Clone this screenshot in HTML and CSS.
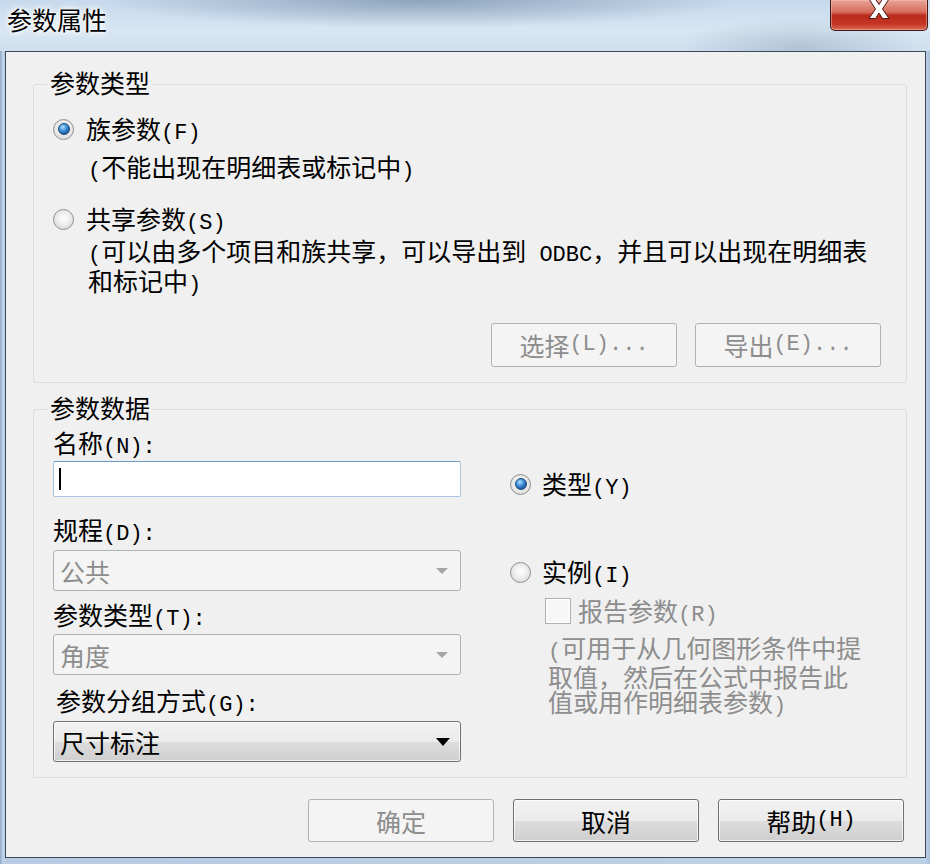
FILE: index.html
```html
<!DOCTYPE html>
<html lang="zh-CN">
<head>
<meta charset="utf-8">
<title>参数属性</title>
<link rel="stylesheet" href="styles.css">
</head>
<body>
<div class="window">
  <div class="titlebar">
    <div class="title">参数属性</div>
    <div class="close">
      <svg class="close-x" width="24" height="19" viewBox="0 0 24 19"><path d="M2 -1 H8.5 L12 4.5 L15.5 -1 H22 L15.5 9 L22 18.5 H15.5 L12 13 L8.5 18.5 H2 L8.5 9 Z" fill="#fff" stroke="#4a1a14" stroke-width="1"/></svg>
    </div>
  </div>
  <div class="client">
    <fieldset class="group g1">
      <legend>参数类型</legend>
      <div class="g1-body">
        <div class="opt"><span class="radio"><span class="dot"></span></span><span>族参数<span class="m">(F)</span></span></div>
        <div class="note1"><span class="m">(</span>不能出现在明细表或标记中<span class="m">)</span></div>
        <div class="opt opt2"><span class="radio"></span><span>共享参数<span class="m">(S)</span></span></div>
        <div class="note2"><span class="m">(</span>可以由多个项目和族共享，可以导出到<span class="m"> ODBC</span>，并且可以出现在明细表<br>和标记中<span class="m">)</span></div>
        <div class="btnrow">
          <div class="btn disabled">选择<span class="m">(L)...</span></div>
          <div class="btn disabled">导出<span class="m">(E)...</span></div>
        </div>
      </div>
    </fieldset>

    <fieldset class="group g2">
      <legend>参数数据</legend>
      <div class="g2-body">
        <div class="col-left">
          <div class="lbl">名称<span class="m">(N):</span></div>
          <div class="textbox"><span class="caret"></span></div>
          <div class="lbl lbl-d">规程<span class="m">(D):</span></div>
          <div class="select disabled s1"><span>公共</span><span class="arrow"></span></div>
          <div class="lbl lbl-t">参数类型<span class="m">(T):</span></div>
          <div class="select disabled s2"><span>角度</span><span class="arrow"></span></div>
          <div class="lbl lbl-g">参数分组方式<span class="m">(G):</span></div>
          <div class="select s3"><span>尺寸标注</span><span class="arrow"></span></div>
        </div>
        <div class="col-right">
          <div class="opt r1"><span class="radio"><span class="dot"></span></span><span>类型<span class="m">(Y)</span></span></div>
          <div class="opt r2"><span class="radio"></span><span>实例<span class="m">(I)</span></span></div>
          <div class="chkrow"><span class="check"></span><span>报告参数<span class="m">(R)</span></span></div>
          <div class="desc"><span class="m">(</span>可用于从几何图形条件中提<br>取值，然后在公式中报告此<br>值或用作明细表参数<span class="m">)</span></div>
        </div>
      </div>
    </fieldset>

    <div class="footer">
      <div class="btn disabled">确定</div>
      <div class="btn">取消</div>
      <div class="btn">帮助<span class="m">(H)</span></div>
    </div>
  </div>
</div>
</body>
</html>
```

FILE: styles.css
```css
* { box-sizing: border-box; }
html, body { margin: 0; padding: 0; }
body {
  width: 930px;
  height: 864px;
  overflow: hidden;
  font-family: "Noto Sans CJK SC", "Noto Sans CJK JP", sans-serif;
  font-size: 25px;
  color: #000;
  background: #b9cee3;
}
.m {
  font-family: "Liberation Mono", "DejaVu Sans Mono", monospace;
  font-size: 22px;
  line-height: 1;
}

.window {
  width: 930px;
  height: 864px;
  display: flex;
  flex-direction: column;
  background: linear-gradient(90deg, #8fa9c4 0px, #c3d6ea 3px, #b7cce2 5px, #bdd1e6 925px, #a9c1da 930px);
}

/* title bar */
.titlebar {
  height: 51px;
  flex: none;
  display: flex;
  justify-content: space-between;
  align-items: flex-start;
  background:
    radial-gradient(ellipse 320px 28px at 420px 0px, rgba(95,120,150,0.55), rgba(95,120,150,0) 100%),
    radial-gradient(ellipse 120px 30px at 800px 48px, rgba(120,140,165,0.35), rgba(120,140,165,0) 100%),
    linear-gradient(#c6d9ec, #d8e6f3 60%, #cfdfef);
}
.title {
  margin-top: 5px;
  padding-left: 7px;
  line-height: 28px;
  text-shadow: 0 0 6px #fff, 0 0 10px #fff, 0 0 3px #fff;
}
.close {
  width: 98px;
  height: 31px;
  margin-right: 2px;
  border: 1px solid #3d1a15;
  border-top: none;
  border-radius: 0 0 5px 5px;
  background: linear-gradient(#e7a596 0%, #d86c5c 40%, #b8291b 52%, #c53626 80%, #d86a56 100%);
  box-shadow: inset 0 0 0 1px rgba(255,200,190,0.45);
  display: flex;
  justify-content: center;
  align-items: flex-start;
}
.close-x { display: block; }

/* client area */
.client {
  margin-left: 5px;
  width: 921px;
  height: 807px;
  flex: none;
  border: 1px solid #3a4a5c;
  background: #f0f0f0;
  padding: 19px 18px 0 27px;
  display: flex;
  flex-direction: column;
}

.group {
  margin: 0;
  padding: 0;
  min-width: 0;
  border: 1px solid #d5dfe5;
  border-radius: 3px;
}
.group legend {
  margin-left: 14px;
  padding: 0 2px 4px;
  line-height: 22px;
  font-size: 25px;
}

.g1-body {
  padding: 18px 25px 15px 19px;
  display: flex;
  flex-direction: column;
}
.opt {
  display: flex;
  align-items: center;
  height: 28px;
  line-height: 28px;
  gap: 12px;
  white-space: nowrap;
}
.radio {
  width: 21px;
  height: 21px;
  flex: none;
  border-radius: 50%;
  border: 1px solid #8e8f8f;
  background: radial-gradient(circle at 50% 45%, #ffffff 0%, #f0f0f0 40%, #d6d6d6 85%, #e6e6e6 100%);
  display: flex;
  align-items: center;
  justify-content: center;
}
.dot {
  width: 12px;
  height: 12px;
  border-radius: 50%;
  border: 1px solid #1b4876;
  background: radial-gradient(circle at 38% 32%, #b5e2ff 0%, #4b9be0 35%, #1c5fa4 70%, #0f3f73 100%);
}
.note1 {
  margin-left: 35px;
  margin-top: 9px;
  height: 28px;
  line-height: 28px;
  white-space: nowrap;
}
.opt2 { margin-top: 25px; }
.note2 {
  margin-left: 35px;
  margin-top: 4px;
  height: 54px;
  line-height: 27px;
  white-space: nowrap;
}
.btnrow {
  display: flex;
  justify-content: flex-end;
  gap: 18px;
  margin-top: 32px;
}

/* buttons */
.btn {
  width: 186px;
  height: 44px;
  border: 1px solid #707070;
  border-radius: 3px;
  background: linear-gradient(#f2f2f2 0%, #ebebeb 50%, #dddddd 51%, #cfcfcf 100%);
  box-shadow: inset 0 0 0 1px rgba(255,255,255,0.7);
  display: flex;
  align-items: center;
  justify-content: center;
  white-space: nowrap;
}
.btn.disabled {
  border-color: #adb2b5;
  background: #f4f4f4;
  box-shadow: none;
  color: #8d8d8d;
}

/* group 2 */
.g2 { margin-top: 13px; }
.g2-body {
  display: flex;
  padding: 6px 0 15px 19px;
}
.col-left {
  width: 408px;
  display: flex;
  flex-direction: column;
}
.lbl {
  line-height: 28px;
  height: 28px;
  white-space: nowrap;
}
.lbl-d { margin-top: 18px; }
.lbl-t { margin-top: 9px; }
.lbl-g { margin-top: 11px; padding-left: 3px; }
.textbox {
  margin-top: 5px;
  height: 36px;
  background: #fff;
  border: 1px solid #a9c6e2;
  border-top-color: #6f99c4;
  border-radius: 2px;
  display: flex;
  align-items: center;
  padding-left: 5px;
}
.caret {
  width: 2px;
  height: 22px;
  background: #000;
}
.select {
  height: 41px;
  border: 1px solid #707070;
  border-radius: 3px;
  background: linear-gradient(#f2f2f2 0%, #ebebeb 50%, #dddddd 51%, #cfcfcf 100%);
  box-shadow: inset 0 0 0 1px rgba(255,255,255,0.7);
  display: flex;
  align-items: center;
  justify-content: space-between;
  padding: 0 10px 0 6px;
}
.select.disabled {
  border-color: #adb2b5;
  background: #f4f4f4;
  box-shadow: none;
  color: #8d8d8d;
}
.s1 { margin-top: 7px; }
.s2 { margin-top: 6px; }
.s3 { margin-top: 7px; }
.arrow {
  width: 0;
  height: 0;
  border-left: 7px solid transparent;
  border-right: 7px solid transparent;
  border-top: 8px solid #000;
}
.select.disabled .arrow {
  border-left-width: 6px;
  border-right-width: 6px;
  border-top: 6px solid #a5a5a5;
  margin-right: 2px;
}

.col-right {
  margin-left: 49px;
  display: flex;
  flex-direction: column;
}
.col-right .opt { gap: 11px; }
.r1 { margin-top: 42px; }
.r2 { margin-top: 60px; }
.chkrow {
  margin-top: 11px;
  margin-left: 35px;
  height: 28px;
  line-height: 28px;
  display: flex;
  align-items: center;
  gap: 7px;
  color: #8d8d8d;
  white-space: nowrap;
}
.check {
  width: 26px;
  height: 26px;
  flex: none;
  border: 1px solid #b1b1b1;
  background: #f7f7f7;
  box-shadow: inset 0 0 0 1px #fdfdfd;
}
.desc {
  margin-top: 10px;
  margin-left: 38px;
  height: 75px;
  line-height: 25px;
  color: #8d8d8d;
  white-space: nowrap;
}

/* footer */
.footer {
  margin-top: 21px;
  margin-right: 3px;
  display: flex;
  justify-content: flex-end;
  gap: 19px;
}
.footer .btn { height: 43px; }
```
